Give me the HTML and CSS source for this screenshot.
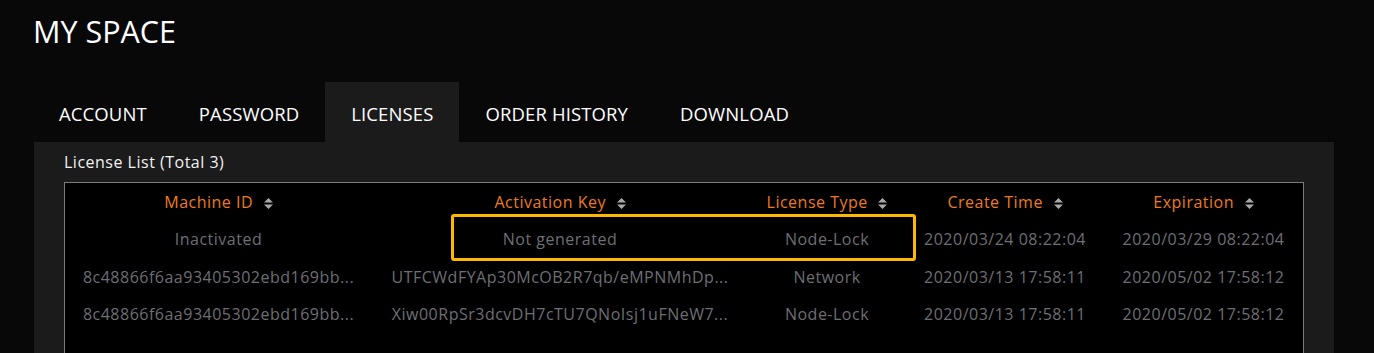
FILE: index.html
```html
<!DOCTYPE html>
<html lang="en">
<head>
    <meta charset="UTF-8">
    <meta name="viewport" content="width=device-width, initial-scale=1.0">
    <title>My Space</title>
    <link rel="stylesheet" href="styles.css">
</head>
<body>
    <header class="page-header">
        <h1>MY SPACE</h1>
    </header>

    <nav class="tabs">
        <a class="tab">ACCOUNT</a>
        <a class="tab">PASSWORD</a>
        <a class="tab active">LICENSES</a>
        <a class="tab">ORDER HISTORY</a>
        <a class="tab">DOWNLOAD</a>
    </nav>

    <section class="panel">
        <h3 class="panel-title">License List (Total 3)</h3>
        <div class="table-wrap">
            <table class="license-table">
                <colgroup>
                    <col style="width: 307px">
                    <col style="width: 376px">
                    <col style="width: 158px">
                    <col style="width: 198px">
                    <col style="width: 199px">
                </colgroup>
                <thead>
                    <tr>
                        <th>Machine ID <span class="sort"><svg width="9" height="11" viewBox="0 0 9 11"><path d="M4.5 0 L9 4.5 L0 4.5 Z M0 6.5 L9 6.5 L4.5 11 Z"/></svg></span></th>
                        <th>Activation Key <span class="sort"><svg width="9" height="11" viewBox="0 0 9 11"><path d="M4.5 0 L9 4.5 L0 4.5 Z M0 6.5 L9 6.5 L4.5 11 Z"/></svg></span></th>
                        <th>License Type <span class="sort"><svg width="9" height="11" viewBox="0 0 9 11"><path d="M4.5 0 L9 4.5 L0 4.5 Z M0 6.5 L9 6.5 L4.5 11 Z"/></svg></span></th>
                        <th>Create Time <span class="sort"><svg width="9" height="11" viewBox="0 0 9 11"><path d="M4.5 0 L9 4.5 L0 4.5 Z M0 6.5 L9 6.5 L4.5 11 Z"/></svg></span></th>
                        <th>Expiration <span class="sort"><svg width="9" height="11" viewBox="0 0 9 11"><path d="M4.5 0 L9 4.5 L0 4.5 Z M0 6.5 L9 6.5 L4.5 11 Z"/></svg></span></th>
                    </tr>
                </thead>
                <tbody>
                    <tr>
                        <td>Inactivated</td>
                        <td>Not generated</td>
                        <td>Node-Lock</td>
                        <td>2020/03/24 08:22:04</td>
                        <td>2020/03/29 08:22:04</td>
                    </tr>
                    <tr>
                        <td>8c48866f6aa93405302ebd169bb...</td>
                        <td>UTFCWdFYAp30McOB2R7qb/eMPNMhDp...</td>
                        <td>Network</td>
                        <td>2020/03/13 17:58:11</td>
                        <td>2020/05/02 17:58:12</td>
                    </tr>
                    <tr>
                        <td>8c48866f6aa93405302ebd169bb...</td>
                        <td>Xiw00RpSr3dcvDH7cTU7QNoIsj1uFNeW7...</td>
                        <td>Node-Lock</td>
                        <td>2020/03/13 17:58:11</td>
                        <td>2020/05/02 17:58:12</td>
                    </tr>
                </tbody>
            </table>
            <div class="highlight"></div>
        </div>
    </section>
</body>
</html>
```

FILE: styles.css
```css
body {
    margin: 0;
    background: #080808;
    color: white;
    font-family: "Open Sans", "DejaVu Sans", sans-serif;
}

.page-header {
    height: 82px;
    padding-left: 33px;
}

.page-header h1 {
    margin: 0;
    padding-top: 10px;
    font-size: 30.5px;
    font-weight: 400;
    line-height: 42px;
}

.tabs {
    display: flex;
    height: 60px;
    padding-left: 33px;
}

.tab {
    padding: 4px 26px 0;
    line-height: 56px;
    font-size: 18.5px;
    letter-spacing: 0.12px;
    color: white;
    cursor: pointer;
}

.tab.active {
    background: #1b1b1b;
}

.panel {
    margin: 0 40px 0 34px;
    padding: 8px 30px 0;
    background: #1b1b1b;
    height: 220px;
}

.panel-title {
    margin: 0 0 8px;
    font-size: 16px;
    font-weight: 400;
    letter-spacing: 0.5px;
    line-height: 24px;
    color: #f2f2f2;
}

.table-wrap {
    position: relative;
    background: #000;
    border: 1px solid #7c7c7c;
    height: 200px;
}

.license-table {
    width: 100%;
    border-collapse: collapse;
    table-layout: fixed;
}

.license-table th,
.license-table td {
    height: 37.5px;
    padding: 0;
    text-align: center;
    font-size: 16px;
    letter-spacing: 0.5px;
    white-space: nowrap;
    overflow: hidden;
}

.license-table th {
    font-weight: 400;
    color: #ee7a1c;
}

.license-table td {
    color: #6d6f73;
}

.sort {
    margin-left: 6px;
}

.sort svg {
    fill: #a8a8a8;
    vertical-align: -1px;
}

.highlight {
    position: absolute;
    left: 386px;
    top: 31px;
    width: 459px;
    height: 41px;
    border: 3px solid #ffb800;
    border-radius: 3px;
}
```
